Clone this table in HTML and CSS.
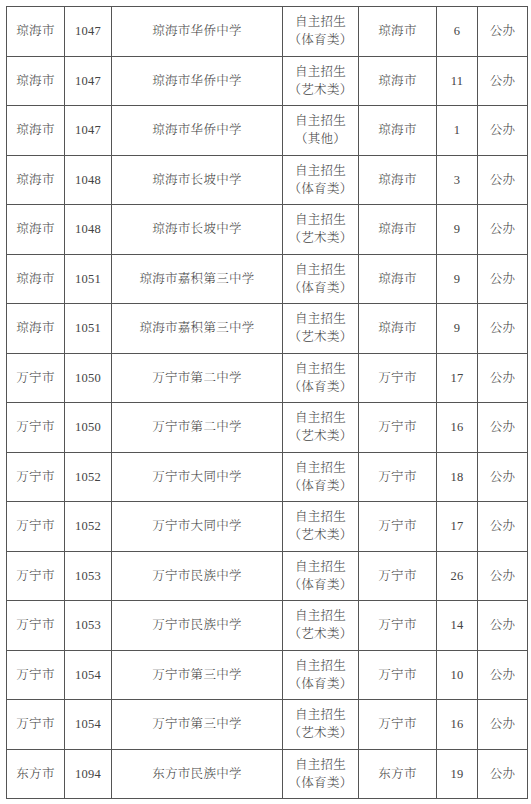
FILE: index.html
```html
<!DOCTYPE html>
<html lang="zh-CN">
<head>
<meta charset="utf-8">
<link rel="stylesheet" href="styles.css">
</head>
<body>
<table class="tbl">
<colgroup>
<col class="c1"><col class="c2"><col class="c3"><col class="c4"><col class="c5"><col class="c6"><col class="c7">
</colgroup>
<tbody>
<tr><td>琼海市</td><td>1047</td><td>琼海市华侨中学</td><td>自主招生<br>（体育类）</td><td>琼海市</td><td>6</td><td>公办</td></tr>
<tr><td>琼海市</td><td>1047</td><td>琼海市华侨中学</td><td>自主招生<br>（艺术类）</td><td>琼海市</td><td>11</td><td>公办</td></tr>
<tr><td>琼海市</td><td>1047</td><td>琼海市华侨中学</td><td>自主招生<br>（其他）</td><td>琼海市</td><td>1</td><td>公办</td></tr>
<tr><td>琼海市</td><td>1048</td><td>琼海市长坡中学</td><td>自主招生<br>（体育类）</td><td>琼海市</td><td>3</td><td>公办</td></tr>
<tr><td>琼海市</td><td>1048</td><td>琼海市长坡中学</td><td>自主招生<br>（艺术类）</td><td>琼海市</td><td>9</td><td>公办</td></tr>
<tr><td>琼海市</td><td>1051</td><td>琼海市嘉积第三中学</td><td>自主招生<br>（体育类）</td><td>琼海市</td><td>9</td><td>公办</td></tr>
<tr><td>琼海市</td><td>1051</td><td>琼海市嘉积第三中学</td><td>自主招生<br>（艺术类）</td><td>琼海市</td><td>9</td><td>公办</td></tr>
<tr><td>万宁市</td><td>1050</td><td>万宁市第二中学</td><td>自主招生<br>（体育类）</td><td>万宁市</td><td>17</td><td>公办</td></tr>
<tr><td>万宁市</td><td>1050</td><td>万宁市第二中学</td><td>自主招生<br>（艺术类）</td><td>万宁市</td><td>16</td><td>公办</td></tr>
<tr><td>万宁市</td><td>1052</td><td>万宁市大同中学</td><td>自主招生<br>（体育类）</td><td>万宁市</td><td>18</td><td>公办</td></tr>
<tr><td>万宁市</td><td>1052</td><td>万宁市大同中学</td><td>自主招生<br>（艺术类）</td><td>万宁市</td><td>17</td><td>公办</td></tr>
<tr><td>万宁市</td><td>1053</td><td>万宁市民族中学</td><td>自主招生<br>（体育类）</td><td>万宁市</td><td>26</td><td>公办</td></tr>
<tr><td>万宁市</td><td>1053</td><td>万宁市民族中学</td><td>自主招生<br>（艺术类）</td><td>万宁市</td><td>14</td><td>公办</td></tr>
<tr><td>万宁市</td><td>1054</td><td>万宁市第三中学</td><td>自主招生<br>（体育类）</td><td>万宁市</td><td>10</td><td>公办</td></tr>
<tr><td>万宁市</td><td>1054</td><td>万宁市第三中学</td><td>自主招生<br>（艺术类）</td><td>万宁市</td><td>16</td><td>公办</td></tr>
<tr><td>东方市</td><td>1094</td><td>东方市民族中学</td><td>自主招生<br>（体育类）</td><td>东方市</td><td>19</td><td>公办</td></tr>
</tbody>
</table>
</body>
</html>
```
FILE: styles.css
```css
html, body {
  margin: 0;
  padding: 0;
  background: #fff;
}
body {
  padding: 6px 0 0 6px;
}
.tbl {
  border-collapse: collapse;
  table-layout: fixed;
  width: 521px;
  font-family: "Liberation Serif", "Noto Serif CJK SC", "Noto Sans CJK SC", serif;
  font-size: 12.5px;
  font-weight: 300;
  letter-spacing: 0.3px;
  color: #444;
}
.c1 { width: 58px; }
.c2 { width: 47px; }
.c3 { width: 171px; }
.c4 { width: 76px; }
.c5 { width: 78px; }
.c6 { width: 41px; }
.c7 { width: 50px; }
.tbl tr {
  height: 49.5px;
}
.tbl td {
  border: 1px solid #555;
  text-align: center;
  vertical-align: middle;
  padding: 0;
  line-height: 18px;
}
```
